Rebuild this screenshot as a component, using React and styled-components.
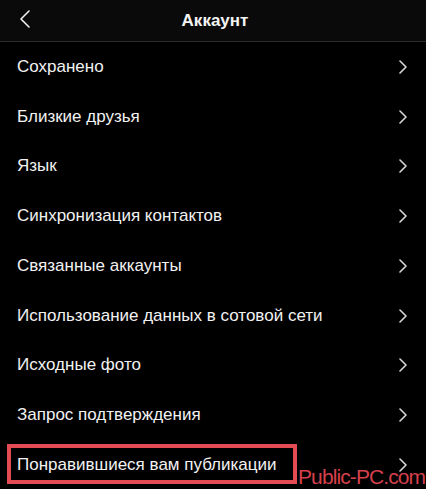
import React from "react";
import styled, { createGlobalStyle } from "styled-components";

const items = [
    "Сохранено",
    "Близкие друзья",
    "Язык",
    "Синхронизация контактов",
    "Связанные аккаунты",
    "Использование данных в сотовой сети",
    "Исходные фото",
    "Запрос подтверждения",
    "Понравившиеся вам публикации",
];

function Chevron({ dir }) {
    const d = dir === "left" ? "M10 1 L2 9 L10 17" : "M2 1 L8 7 L2 13";
    const size = dir === "left" ? [12, 18] : [10, 14];
    return (
        <svg width={size[0]} height={size[1]} viewBox={`0 0 ${size[0]} ${size[1]}`} fill="none">
            <path d={d} stroke={dir === "left" ? "#f2f2f2" : "#d6d6d6"} strokeWidth="1.6" strokeLinecap="round" strokeLinejoin="round" />
        </svg>
    );
}

export default function App() {
    return (
        <>
            <GlobalStyle />
            <Screen>
                <Header>
                    <Back>
                        <Chevron dir="left" />
                    </Back>
                    <Title>Аккаунт</Title>
                </Header>
                <List>
                    {items.map((label, i) => (
                        <Row key={label}>
                            <Label>{label}</Label>
                            <Chevron dir="right" />
                            {i === items.length - 1 && (
                                <>
                                    <Highlight />
                                    <Watermark>Public-PC.com</Watermark>
                                </>
                            )}
                        </Row>
                    ))}
                </List>
            </Screen>
        </>
    );
}

const GlobalStyle = createGlobalStyle`
    body {
        margin: 0;
        background: #000;
        font-family: "Liberation Sans", Arial, sans-serif;
    }
`;

const Screen = styled.div`
    width: 426px;
    height: 489px;
    overflow: hidden;
    background: #000;
    color: #f2f2f2;
`;

const Header = styled.header`
    height: 41px;
    border-bottom: 1px solid #2c2c2c;
    background: #0a0a0a;
    display: flex;
    align-items: center;
    justify-content: center;
    position: relative;
`;

const Back = styled.div`
    position: absolute;
    left: 19px;
    top: 10px;
    display: flex;
`;

const Title = styled.h1`
    margin: 0;
    font-size: 17px;
    font-weight: 700;
    color: #f4f4f4;
    padding-left: 4px;
`;

const List = styled.ul`
    list-style: none;
    margin: 0;
    padding: 0;
`;

const Row = styled.li`
    height: 49.75px;
    display: flex;
    align-items: center;
    justify-content: space-between;
    padding: 0 18px 0 17px;
    box-sizing: border-box;
    position: relative;
`;

const Label = styled.span`
    font-size: 17px;
    color: #f2f2f2;
`;

const Highlight = styled.div`
    position: absolute;
    left: 7px;
    top: 4px;
    width: 290px;
    height: 40px;
    box-sizing: border-box;
    border: 4px solid #e34c52;
`;

const Watermark = styled.span`
    position: absolute;
    left: 298px;
    top: 26px;
    font-size: 21px;
    line-height: 1;
    letter-spacing: -0.9px;
    white-space: nowrap;
    color: #d6404b;
`;
